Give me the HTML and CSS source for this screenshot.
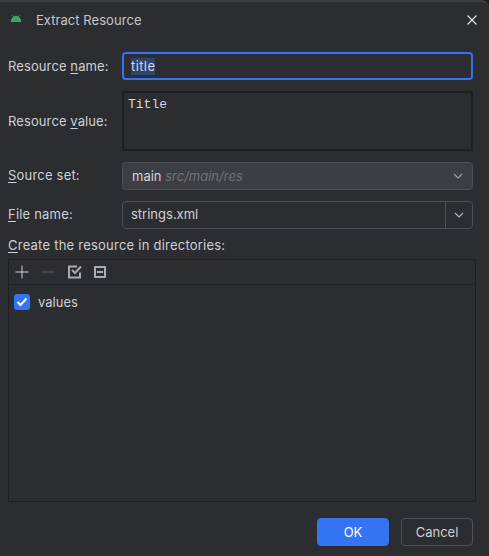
FILE: index.html
```html
<!DOCTYPE html>
<html lang="en">
<head>
<meta charset="utf-8">
<title>Extract Resource</title>
<link rel="stylesheet" href="styles.css">
</head>
<body>
<div class="dialog">
  <header class="titlebar">
    <svg class="android" width="10" height="7" viewBox="0 0 10 7"><path d="M1.6 0 2.8 1.4A4.8 4.8 0 0 1 7.2 1.4L8.4 0 8.9 0.4 7.9 1.8A4.6 4.6 0 0 1 9.3 4H10V7H0V4H0.7A4.6 4.6 0 0 1 2.1 1.8L1.1 0.4Z" fill="#3ba35c"/></svg>
    <span class="title">Extract Resource</span>
    <svg class="close" width="12" height="12" viewBox="0 0 12 12"><path d="M1.5 1.5 10.5 10.5M10.5 1.5 1.5 10.5" stroke="#e6e6e6" stroke-width="1.1" fill="none"/></svg>
  </header>
  <main class="form">
    <label class="label">Resource <u>n</u>ame:</label>
    <div class="input focused"><span class="selected">title</span></div>
    <label class="label">Resource <u>v</u>alue:</label>
    <div class="textarea">Title</div>
    <label class="label raised"><u>S</u>ource set:</label>
    <div class="combo disabled">
      <span class="value">main <i class="hint">src/main/res</i></span>
      <svg class="chev" width="10" height="6" viewBox="0 0 10 6"><path d="M1 1 5 5 9 1" stroke="#9da0a8" stroke-width="1.1" fill="none"/></svg>
    </div>
    <label class="label raised"><u>F</u>ile name:</label>
    <div class="combo editable">
      <span class="value">strings.xml</span>
      <span class="arrow"><svg class="chev" width="10" height="6" viewBox="0 0 10 6"><path d="M1 1 5 5 9 1" stroke="#b4b8bf" stroke-width="1.1" fill="none"/></svg></span>
    </div>
  </main>
  <div class="dirs-label"><u>C</u>reate the resource in directories:</div>
  <section class="tree">
    <div class="toolbar">
      <svg width="14" height="14" viewBox="0 0 14 14"><path d="M7 0.5V13.5M0.5 7H13.5" stroke="#ced0d6" fill="none"/></svg>
      <svg width="14" height="14" viewBox="0 0 14 14"><path d="M0.5 7H13.5" stroke="#5a5d63" fill="none"/></svg>
      <svg class="tool-check" width="14" height="14" viewBox="0 0 14 14"><path d="M12 7.5V12.5H1V1.5H9" stroke="#a8abb0" stroke-width="2" fill="none"/><path d="M4 5 7 8 13 1.5" stroke="#a8abb0" stroke-width="2" fill="none"/></svg>
      <svg width="12" height="12" viewBox="0 0 12 12"><rect x="1" y="1" width="10" height="10" stroke="#a8abb0" stroke-width="2" fill="none"/><path d="M3 6H9" stroke="#a8abb0" stroke-width="2" fill="none"/></svg>
    </div>
    <div class="item">
      <span class="check"><svg width="12" height="10" viewBox="0 0 12 10"><path d="M1.5 5 4.5 8 10.5 1.5" stroke="#fff" stroke-width="2" fill="none"/></svg></span>
      <span>values</span>
    </div>
  </section>
  <footer class="buttons">
    <button class="btn primary">OK</button>
    <button class="btn">Cancel</button>
  </footer>
</div>
</body>
</html>
```

FILE: styles.css
```css
* { box-sizing: border-box; }
html, body { margin: 0; height: 100%; background: #1e1f22; }
body { font-family: Inter, "Liberation Sans", sans-serif; font-size: 13px; color: #ced0d6; }
u { text-underline-offset: 2px; }
.dialog {
  width: 489px; height: 556px; background: #2b2d30;
  border-top: 2px solid #3c3e42; border-top-right-radius: 8px;
  display: flex; flex-direction: column; overflow: hidden;
}
.titlebar { height: 36px; display: flex; align-items: center; padding: 0 11px 0 11px; flex: none; }
.android { margin-right: 15px; margin-top: -3px; }
.title { flex: 1; color: #c4c6cc; letter-spacing: 0.05px; }
.form {
  margin-top: 14px; padding: 0 16px 0 8px; display: grid;
  grid-template-columns: 114px 351px; grid-template-rows: 28px 60px 28px 28px;
  row-gap: 11px; align-items: center;
}
.label { white-space: nowrap; letter-spacing: 0.1px; }
.raised { padding-bottom: 2px; letter-spacing: 0.2px; }
.input, .textarea, .combo { height: 100%; width: 100%; }
.input { border: 2px solid #3574f0; border-radius: 4px; padding-left: 7px; display: flex; align-items: center; }
.selected { background: #2e436e; line-height: 17px; color: #d5d8de; letter-spacing: 0.4px; }
.textarea {
  border: 2px solid #1e1f22; padding: 3px 4px;
  font-family: "Liberation Mono", monospace; font-size: 13px; line-height: 17px; color: #d5d8de;
}
.combo { border: 1px solid #4e5157; border-radius: 4px; display: flex; align-items: center; }
.value { flex: 1; padding-left: 9px; }
.disabled { background: #3c3e43; padding-right: 9px; }
.disabled .value { color: #d0d2d8; }
.hint { color: #6f737a; font-style: italic; }
.editable .value { padding: 0 0 2px 8px; }
.arrow { width: 27px; height: 100%; border-left: 1px solid #4e5157; display: flex; align-items: center; justify-content: center; }
.chev { display: block; }
.dirs-label { margin: 8px 8px 6px; line-height: 16px; flex: none; letter-spacing: 0.23px; }
.tree { margin: 0 13px 0 8px; height: 243px; border: 1px solid #1e1f22; flex: none; }
.toolbar { height: 25px; border-bottom: 1px solid #1e1f22; display: flex; align-items: center; gap: 12px; padding-left: 6px; }
.tool-check { margin-left: 1px; }
.item { display: flex; align-items: center; gap: 8px; padding: 9px 0 0 5px; }
.check { width: 16px; height: 16px; border-radius: 3px; background: #3574f0; display: flex; align-items: center; justify-content: center; }
.buttons { margin-top: 16px; padding-right: 16px; display: flex; justify-content: flex-end; gap: 12px; flex: none; }
.btn { width: 72px; height: 28px; border-radius: 4px; border: 1px solid #4e5157; background: transparent; color: #ced0d6; font: inherit; padding: 0; }
.primary { background: #3574f0; border-color: #3574f0; color: #fff; }
```
